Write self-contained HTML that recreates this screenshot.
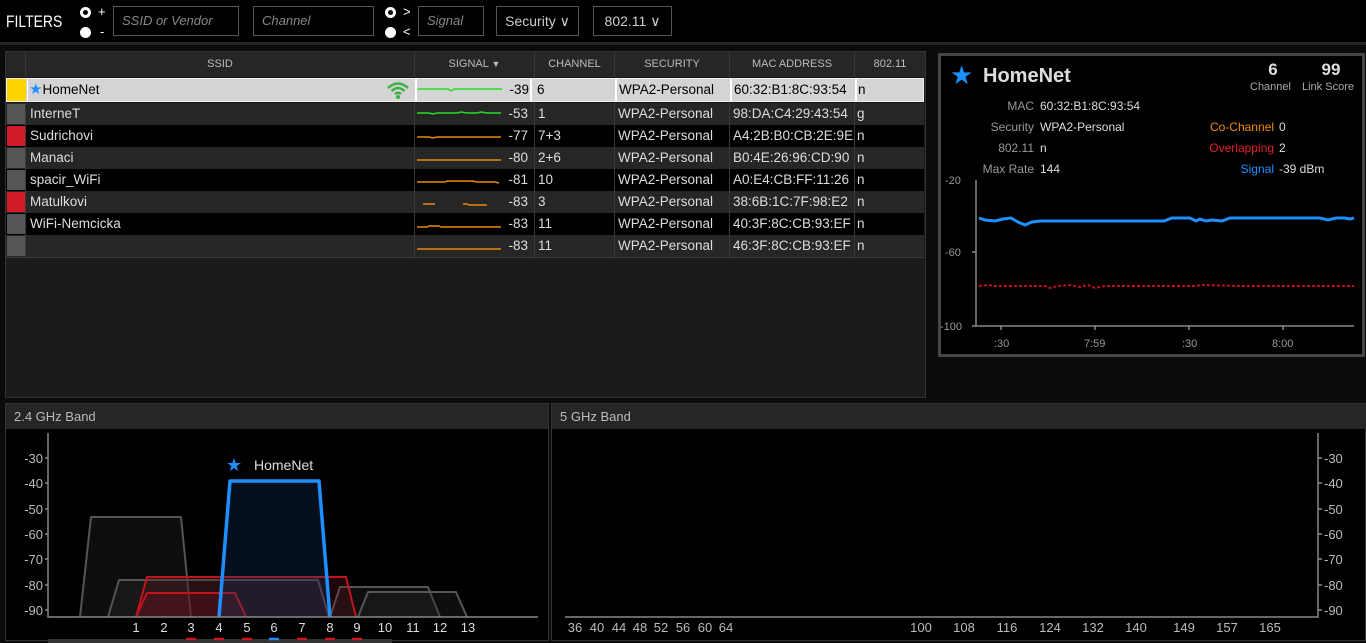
<!DOCTYPE html>
<html><head><meta charset="utf-8"><style>
*{margin:0;padding:0;box-sizing:border-box}
body{width:1366px;height:643px;background:#0b0b0b;font-family:"Liberation Sans",sans-serif;color:#ddd;position:relative;overflow:hidden;font-size:13px}
.a{position:absolute}
.inp{position:absolute;border:1px solid #555;height:30px;top:6px;color:#888;font-style:italic;font-size:13px;line-height:28px;padding-left:8px}
.sel{position:absolute;border:1px solid #555;height:30px;top:6px;color:#ccc;font-size:14px;line-height:28px;text-align:center}
.rad{position:absolute;width:11px;height:11px;border-radius:50%}
.row{position:absolute;left:6px;width:918px;height:22px;font-size:13.5px;line-height:22px}
.row div{position:absolute;top:0;height:22px}
.hd{position:absolute;top:0;height:25px;line-height:25px;text-align:center;color:#bbb;font-size:11px;border-right:1px solid #3a3a3a}
</style></head><body>
<!-- top bar -->
<div class="a" style="left:0;top:0;width:1366px;height:42px;background:#000"></div>
<div class="a" style="left:6px;top:12px;font-size:17px;color:#fff;transform:scaleX(0.82);transform-origin:left top">FILTERS</div>
<div class="rad" style="left:80px;top:7px;border:3px solid #fff;background:#000"></div><div class="a" style="left:98px;top:4px;color:#fff;font-size:13px">+</div>
<div class="rad" style="left:80px;top:27px;background:#fff"></div><div class="a" style="left:100px;top:24px;color:#fff;font-size:13px">-</div>
<div class="inp" style="left:113px;width:126px">SSID or Vendor</div>
<div class="inp" style="left:253px;width:121px">Channel</div>
<div class="rad" style="left:385px;top:7px;border:3px solid #fff;background:#000"></div><div class="a" style="left:403px;top:4px;color:#fff;font-size:13px">&gt;</div>
<div class="rad" style="left:385px;top:27px;background:#fff"></div><div class="a" style="left:403px;top:24px;color:#fff;font-size:13px">&lt;</div>
<div class="inp" style="left:418px;width:66px">Signal</div>
<div class="sel" style="left:496px;width:83px">Security ∨</div>
<div class="sel" style="left:593px;width:79px">802.11 ∨</div>
<div class="a" style="left:0;top:42px;width:1366px;height:3px;background:#262626"></div>

<!-- table panel -->
<div class="a" style="left:5px;top:51px;width:921px;height:347px;background:#1b1b1b;border:1px solid #333"></div>
<div class="a" style="left:6px;top:52px;width:919px;height:25px;background:#262626">
<div class="hd" style="left:0;width:20px"></div>
<div class="hd" style="left:20px;width:389px">SSID</div>
<div class="hd" style="left:409px;width:120px">SIGNAL <span style="font-size:9px">▼</span></div>
<div class="hd" style="left:529px;width:80px">CHANNEL</div>
<div class="hd" style="left:609px;width:115px">SECURITY</div>
<div class="hd" style="left:724px;width:125px">MAC ADDRESS</div>
<div class="hd" style="left:849px;width:70px;border:0">802.11</div>
</div>

<!-- rows -->
<div class="row" style="top:78px;height:24px;background:#d4d4d4;color:#000;border:1px solid #eee">
<div style="left:0;width:19px;background:#ffd500;height:22px"></div>
<div style="left:20px;width:1px;background:#fff"></div>
<div style="left:20px;width:388px;padding-left:2px"><span style="color:#1e8fff;font-size:15px">★</span>HomeNet</div>
<div style="left:408px;width:2px;background:#fff"></div>
<div style="left:523px;width:2px;background:#fff"></div>
<div style="left:608px;width:2px;background:#fff"></div>
<div style="left:723px;width:2px;background:#fff"></div>
<div style="left:848px;width:2px;background:#fff"></div>
<svg class="a" style="left:378px;top:1px" width="26" height="20" viewBox="0 0 26 20"><g fill="none" stroke="#3cb043" stroke-width="2.5"><path d="M3 8 Q13 -1 23 8"/><path d="M6.5 11 Q13 5 19.5 11"/><path d="M10 14 Q13 11.5 16 14"/></g><circle cx="13" cy="17" r="2" fill="#3cb043"/></svg>
<svg class="a" style="left:411px;top:0" width="85" height="22"><path d="M0 10 H30 L33 12 L36 10 H84" stroke="#22dd22" stroke-width="1.5" fill="none"/></svg>
<div style="left:410px;width:114px;text-align:right;padding-right:2px">-39</div>
<div style="left:530px">6</div>
<div style="left:612px">WPA2-Personal</div>
<div style="left:727px">60:32:B1:8C:93:54</div>
<div style="left:851px">n</div>
</div>

<div class="row" style="top:103px;background:#262626"><div style="left:1px;width:18px;background:#555;top:1px;height:20px"></div><div style="left:24px">InterneT</div>
<svg class="a" style="left:411px;top:0" width="85" height="22"><path d="M0 10 H12 L16 11 L20 10 H40 L44 9 L50 10 H60 L64 9 L70 10 H84" stroke="#22dd22" stroke-width="1.5" fill="none"/></svg>
<div style="left:410px;width:114px;text-align:right;padding-right:2px">-53</div><div style="left:532px">1</div><div style="left:612px">WPA2-Personal</div><div style="left:727px">98:DA:C4:29:43:54</div><div style="left:851px">g</div></div>

<div class="row" style="top:125px;background:#000"><div style="left:1px;width:18px;background:#d21c2a;top:1px;height:20px"></div><div style="left:24px">Sudrichovi</div>
<svg class="a" style="left:411px;top:0" width="85" height="22"><path d="M0 12 H12 L16 13 L20 12 H84" stroke="#e8890c" stroke-width="1.5" fill="none"/></svg>
<div style="left:410px;width:114px;text-align:right;padding-right:2px">-77</div><div style="left:532px">7+3</div><div style="left:612px">WPA2-Personal</div><div style="left:727px">A4:2B:B0:CB:2E:9E</div><div style="left:851px">n</div></div>

<div class="row" style="top:147px;background:#262626"><div style="left:1px;width:18px;background:#555;top:1px;height:20px"></div><div style="left:24px">Manaci</div>
<svg class="a" style="left:411px;top:0" width="85" height="22"><path d="M0 13 H84" stroke="#e8890c" stroke-width="1.5" fill="none"/></svg>
<div style="left:410px;width:114px;text-align:right;padding-right:2px">-80</div><div style="left:532px">2+6</div><div style="left:612px">WPA2-Personal</div><div style="left:727px">B0:4E:26:96:CD:90</div><div style="left:851px">n</div></div>

<div class="row" style="top:169px;background:#000"><div style="left:1px;width:18px;background:#555;top:1px;height:20px"></div><div style="left:24px">spacir_WiFi</div>
<svg class="a" style="left:411px;top:0" width="85" height="22"><path d="M0 13 H28 L30 12 H56 L60 13 H78 L82 14" stroke="#e8890c" stroke-width="1.5" fill="none"/></svg>
<div style="left:410px;width:114px;text-align:right;padding-right:2px">-81</div><div style="left:532px">10</div><div style="left:612px">WPA2-Personal</div><div style="left:727px">A0:E4:CB:FF:11:26</div><div style="left:851px">n</div></div>

<div class="row" style="top:191px;background:#262626"><div style="left:1px;width:18px;background:#d21c2a;top:1px;height:20px"></div><div style="left:24px">Matulkovi</div>
<svg class="a" style="left:411px;top:0" width="85" height="22"><path d="M6 13 H18 M46 13 H50 L52 14 H70" stroke="#e8890c" stroke-width="1.5" fill="none"/></svg>
<div style="left:410px;width:114px;text-align:right;padding-right:2px">-83</div><div style="left:532px">3</div><div style="left:612px">WPA2-Personal</div><div style="left:727px">38:6B:1C:7F:98:E2</div><div style="left:851px">n</div></div>

<div class="row" style="top:213px;background:#000"><div style="left:1px;width:18px;background:#555;top:1px;height:20px"></div><div style="left:24px">WiFi-Nemcicka</div>
<svg class="a" style="left:411px;top:0" width="85" height="22"><path d="M0 14 H10 L12 13 H22 L24 14 H84" stroke="#e8890c" stroke-width="1.5" fill="none"/></svg>
<div style="left:410px;width:114px;text-align:right;padding-right:2px">-83</div><div style="left:532px">11</div><div style="left:612px">WPA2-Personal</div><div style="left:727px">40:3F:8C:CB:93:EF</div><div style="left:851px">n</div></div>

<div class="row" style="top:235px;background:#262626"><div style="left:1px;width:18px;background:#555;top:1px;height:20px"></div>
<svg class="a" style="left:411px;top:0" width="85" height="22"><path d="M0 14 H84" stroke="#e8890c" stroke-width="1.5" fill="none"/></svg>
<div style="left:410px;width:114px;text-align:right;padding-right:2px">-83</div><div style="left:532px">11</div><div style="left:612px">WPA2-Personal</div><div style="left:727px">46:3F:8C:CB:93:EF</div><div style="left:851px">n</div></div>
<!-- column separators -->
<div class="a" style="left:25px;top:103px;width:1px;height:154px;background:#3a3a3a"></div>
<div class="a" style="left:414px;top:103px;width:1px;height:154px;background:#3a3a3a"></div>
<div class="a" style="left:534px;top:103px;width:1px;height:154px;background:#3a3a3a"></div>
<div class="a" style="left:614px;top:103px;width:1px;height:154px;background:#3a3a3a"></div>
<div class="a" style="left:729px;top:103px;width:1px;height:154px;background:#3a3a3a"></div>
<div class="a" style="left:854px;top:103px;width:1px;height:154px;background:#3a3a3a"></div>
<div class="a" style="left:6px;top:257px;width:918px;height:1px;background:#3a3a3a"></div>

<!-- details panel -->
<div class="a" style="left:938px;top:53px;width:427px;height:304px;border:3px solid #454545;background:#000"></div>
<div class="a" style="left:950px;top:60px;color:#1e8fff;font-size:26px">★</div>
<div class="a" style="left:983px;top:65px;color:#ddd;font-size:20px;font-weight:bold">HomeNet</div>
<div class="a" style="left:1258px;top:60px;width:30px;text-align:center;font-size:17px;font-weight:bold">6</div>
<div class="a" style="left:1250px;top:81px;font-size:11px;color:#aaa">Channel</div>
<div class="a" style="left:1316px;top:60px;width:30px;text-align:center;font-size:17px;font-weight:bold">99</div>
<div class="a" style="left:1302px;top:81px;font-size:11px;color:#aaa">Link Score</div>
<div class="a" style="left:940px;top:99px;width:94px;text-align:right;color:#999;font-size:12px">MAC</div><div class="a" style="left:1040px;top:99px;font-size:12px">60:32:B1:8C:93:54</div>
<div class="a" style="left:940px;top:120px;width:94px;text-align:right;color:#999;font-size:12px">Security</div><div class="a" style="left:1040px;top:120px;font-size:12px">WPA2-Personal</div>
<div class="a" style="left:940px;top:141px;width:94px;text-align:right;color:#999;font-size:12px">802.11</div><div class="a" style="left:1040px;top:141px;font-size:12px">n</div>
<div class="a" style="left:940px;top:162px;width:94px;text-align:right;color:#999;font-size:12px">Max Rate</div><div class="a" style="left:1040px;top:162px;font-size:12px">144</div>
<div class="a" style="left:1150px;top:120px;width:124px;text-align:right;color:#f08a00;font-size:12px">Co-Channel</div><div class="a" style="left:1279px;top:120px;font-size:12px">0</div>
<div class="a" style="left:1150px;top:141px;width:124px;text-align:right;color:#e0202a;font-size:12px">Overlapping</div><div class="a" style="left:1279px;top:141px;font-size:12px">2</div>
<div class="a" style="left:1150px;top:162px;width:124px;text-align:right;color:#1e8fff;font-size:12px">Signal</div><div class="a" style="left:1279px;top:162px;font-size:12px">-39 dBm</div>
<svg class="a" style="left:940px;top:170px" width="424" height="185">
<g fill="#999" font-family="Liberation Sans" font-size="11"><text x="5" y="14">-20</text><text x="5" y="86">-60</text><text x="0" y="160">-100</text>
<text x="54" y="177">:30</text><text x="144" y="177">7:59</text><text x="242" y="177">:30</text><text x="332" y="177">8:00</text></g>
<path d="M36 10 V156 H414 M32 82 H36 M32 156 H36 M61 156 V160 M155 156 V160 M249 156 V160 M343 156 V160" stroke="#888" fill="none" stroke-width="1.5"/>
<path d="M39 48 L45 50 L55 51 L63 49 L71 48 L78 52 L85 55 L92 52 L100 51 L224 51 L232 48 L250 48 L256 51 L260 49 L266 51 L272 50 L282 51 L290 48 L380 48 L388 50 L396 48 L404 48 L410 49 L414 48" stroke="#1e8fff" stroke-width="3" fill="none"/>
<path d="M39 116 L48 115 L55 116 L105 116 L110 118 L118 116 L130 115 L140 117 L148 115 L155 118 L165 116 L255 116 L262 115 L300 116 L414 116" stroke="#c0101c" stroke-width="2" stroke-dasharray="3 2" fill="none"/>
</svg>

<!-- bottom panels -->
<div class="a" style="left:5px;top:403px;width:544px;height:238px;border:1px solid #333;background:#000"></div>
<div class="a" style="left:6px;top:404px;width:542px;height:25px;background:#262626;color:#bbb;font-size:13px;line-height:25px;padding-left:8px">2.4 GHz Band</div>
<div class="a" style="left:551px;top:403px;width:815px;height:238px;border:1px solid #333;background:#000"></div>
<div class="a" style="left:552px;top:404px;width:814px;height:25px;background:#262626;color:#bbb;font-size:13px;line-height:25px;padding-left:8px">5 GHz Band</div>
<div class="a" style="left:48px;top:639px;width:344px;height:4px;background:#333"></div>

<svg class="a" style="left:0;top:429px" width="549" height="212">
<g fill="#bbb" font-family="Liberation Sans" font-size="13" text-anchor="end">
<text x="43" y="34">-30</text><text x="43" y="59">-40</text><text x="43" y="85">-50</text><text x="43" y="110">-60</text><text x="43" y="135">-70</text><text x="43" y="161">-80</text><text x="43" y="186">-90</text></g>
<g stroke-width="2" stroke-linejoin="round">
<path d="M80 188 L91 88 L181 88 L191 188" stroke="#555" fill="rgba(40,40,40,0.35)"/>
<path d="M108 188 L119 151 L318 151 L329 188" stroke="#555" fill="rgba(40,40,40,0.35)"/>
<path d="M330 188 L340 158 L428 158 L440 188" stroke="#555" fill="rgba(40,40,40,0.35)"/>
<path d="M358 188 L368 163 L456 163 L467 188" stroke="#555" fill="rgba(40,40,40,0.35)"/>
<path d="M136 188 L147 148 L346 148 L356 188" stroke="#c0141e" fill="rgba(120,20,30,0.25)"/>
<path d="M136 188 L147 164 L235 164 L246 188" stroke="#c0141e" fill="rgba(120,20,30,0.25)"/>
<path d="M219 188 L230 52 L319 52 L330 188" stroke="#1e8fff" stroke-width="3.5" fill="rgba(20,60,120,0.25)"/>
</g>
<path d="M48 4 V188 H538 M45 29 H48 M45 54 H48 M45 80 H48 M45 105 H48 M45 130 H48 M45 156 H48 M45 181 H48" stroke="#888" stroke-width="1.5" fill="none"/>
<g fill="#ddd" font-family="Liberation Sans" font-size="13" text-anchor="middle">
<text x="136" y="203">1</text><text x="164" y="203">2</text><text x="191" y="203">3</text><text x="219" y="203">4</text><text x="247" y="203">5</text><text x="274" y="203">6</text><text x="302" y="203">7</text><text x="330" y="203">8</text><text x="357" y="203">9</text><text x="385" y="203">10</text><text x="413" y="203">11</text><text x="440" y="203">12</text><text x="468" y="203">13</text></g>
<g stroke-width="2.5"><path d="M186 210 H196 M214 210 H224 M242 210 H252 M297 210 H307 M325 210 H335 M352 210 H362" stroke="#d0141e"/><path d="M269 210 H279" stroke="#1e8fff"/></g>
<text x="226" y="42" fill="#1e8fff" font-size="18" font-family="DejaVu Sans">★</text>
<text x="254" y="41" fill="#ddd" font-size="14" font-family="Liberation Sans">HomeNet</text>
</svg>

<svg class="a" style="left:552px;top:429px" width="814" height="212">
<path d="M766 4 V188 H13 M766 29 H770 M766 54 H770 M766 80 H770 M766 105 H770 M766 130 H770 M766 156 H770 M766 181 H770" stroke="#888" stroke-width="1.5" fill="none"/>
<g fill="#bbb" font-family="Liberation Sans" font-size="13">
<text x="772" y="34">-30</text><text x="772" y="59">-40</text><text x="772" y="85">-50</text><text x="772" y="110">-60</text><text x="772" y="135">-70</text><text x="772" y="161">-80</text><text x="772" y="186">-90</text></g>
<g fill="#bbb" font-family="Liberation Sans" font-size="13" text-anchor="middle">
<text x="23" y="203">36</text><text x="45" y="203">40</text><text x="67" y="203">44</text><text x="88" y="203">48</text><text x="109" y="203">52</text><text x="131" y="203">56</text><text x="153" y="203">60</text><text x="174" y="203">64</text>
<text x="369" y="203">100</text><text x="412" y="203">108</text><text x="455" y="203">116</text><text x="498" y="203">124</text><text x="541" y="203">132</text><text x="584" y="203">140</text><text x="632" y="203">149</text><text x="675" y="203">157</text><text x="718" y="203">165</text></g>
</svg>
</body></html>
